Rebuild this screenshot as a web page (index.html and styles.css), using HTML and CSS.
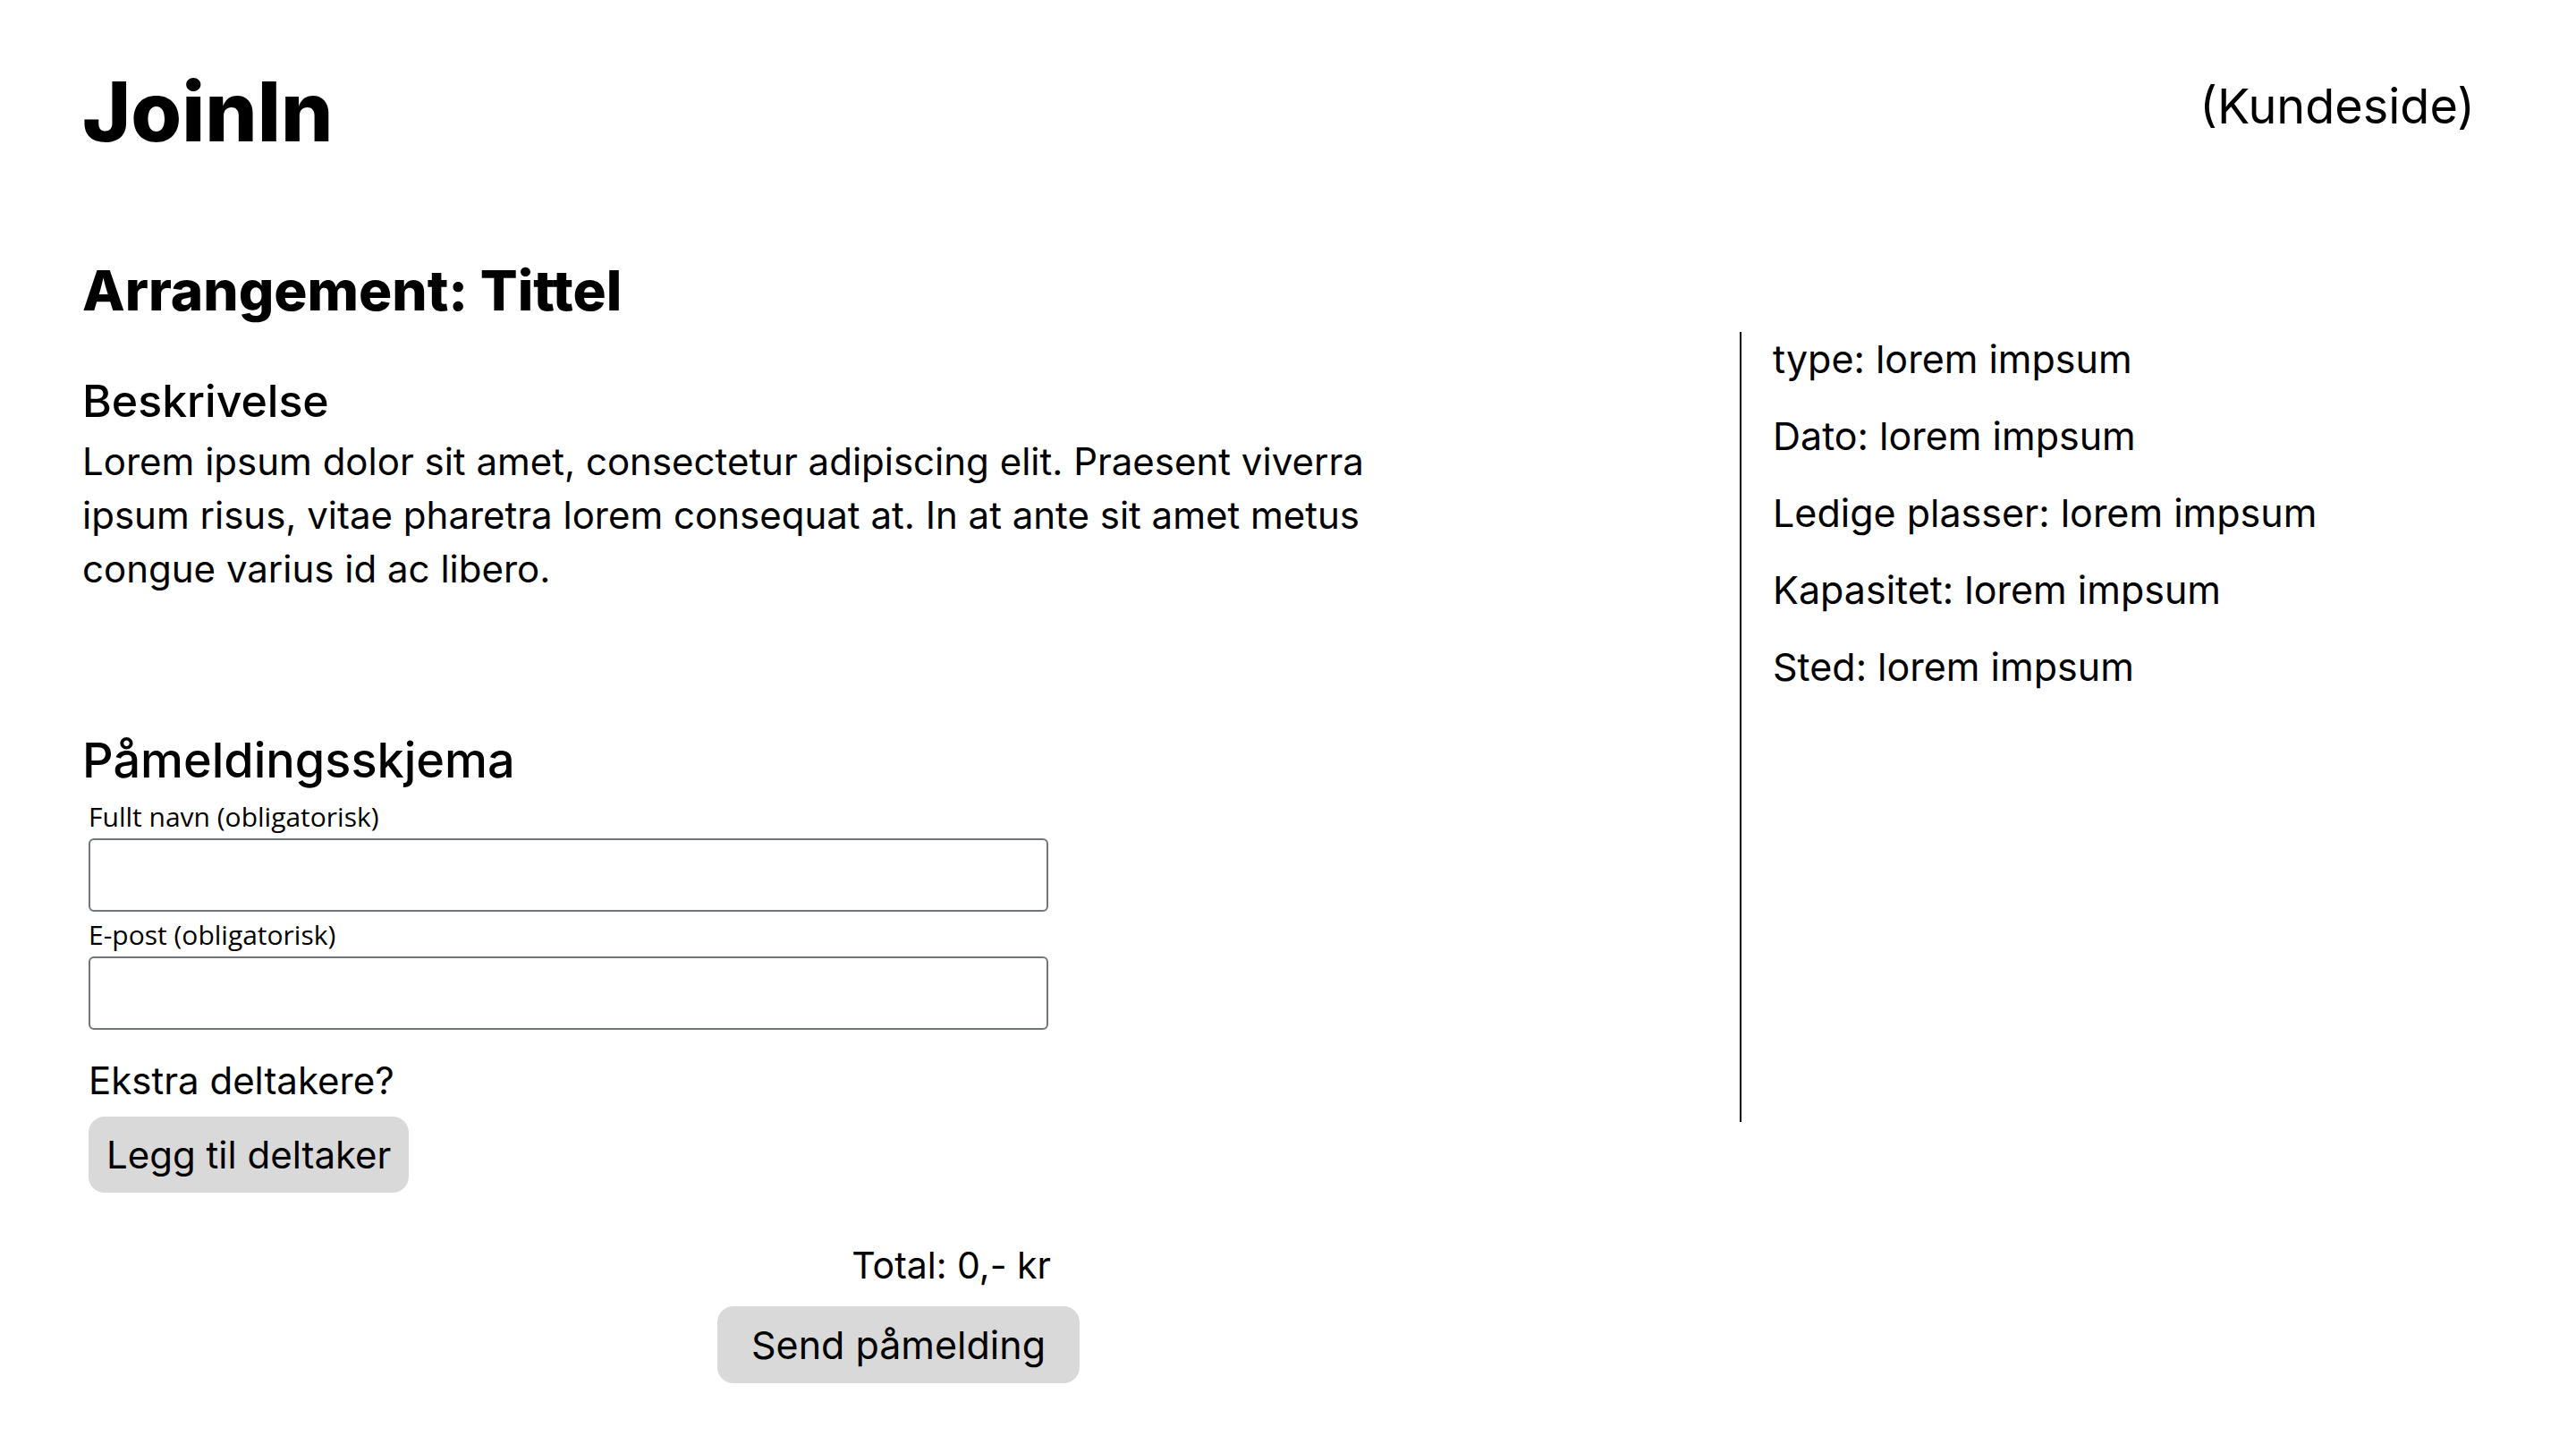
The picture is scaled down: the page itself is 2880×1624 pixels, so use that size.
FILE: index.html
```html
<!DOCTYPE html>
<html lang="no">
<head>
<meta charset="utf-8">
<title>JoinIn – Arrangement</title>
<link rel="stylesheet" href="styles.css">
</head>
<body>
<header class="topbar">
  <h1 class="logo">JoinIn</h1>
  <span class="page-kind">(Kundeside)</span>
</header>
<main class="event">
  <h2 class="event-title">Arrangement: Tittel</h2>
  <div class="event-body">
    <section class="event-main">
      <h3 class="section-title">Beskrivelse</h3>
      <p class="description">Lorem ipsum dolor sit amet, consectetur adipiscing elit. Praesent viverra ipsum risus, vitae pharetra lorem consequat at. In at ante sit amet metus congue varius id ac libero.</p>
      <h3 class="section-title form-title">Påmeldingsskjema</h3>
      <form class="signup">
        <label class="field-label" for="name">Fullt navn (obligatorisk)</label>
        <input class="field-input" id="name" type="text">
        <label class="field-label field-label-second" for="email">E-post (obligatorisk)</label>
        <input class="field-input" id="email" type="email">
        <p class="extra">Ekstra deltakere?</p>
        <button type="button" class="btn btn-add">Legg til deltaker</button>
        <p class="total">Total: 0,- kr</p>
      </form>
      <button type="submit" class="btn btn-send">Send påmelding</button>
    </section>
    <aside class="event-info">
      <p class="info-row">type: lorem impsum</p>
      <p class="info-row">Dato: lorem impsum</p>
      <p class="info-row">Ledige plasser: lorem impsum</p>
      <p class="info-row">Kapasitet: lorem impsum</p>
      <p class="info-row">Sted: lorem impsum</p>
    </aside>
  </div>
</main>
</body>
</html>
```

FILE: styles.css
```css
* {
  box-sizing: border-box;
}

body {
  margin: 0;
  background: #ffffff;
  color: #000000;
  font-family: Inter, "Noto Sans", sans-serif;
}

.topbar {
  display: flex;
  justify-content: space-between;
  align-items: flex-start;
  padding: 71px 113px 0 92px;
}

.logo {
  margin: 0;
  font-size: 92px;
  line-height: 108px;
  font-weight: 800;
}

.page-kind {
  margin-top: 17px;
  font-size: 54px;
  line-height: 62px;
  font-weight: 400;
}

.event {
  padding: 0 116px 0 92px;
}

.event-title {
  margin: 110px 0 10px;
  font-size: 62px;
  line-height: 72px;
  font-weight: 800;
}

.event-body {
  display: grid;
  grid-template-columns: 1825px 1fr;
  column-gap: 28px;
  align-items: start;
}

.event-main {
  padding-top: 47px;
}

.section-title {
  margin: 0;
  font-size: 50px;
  line-height: 60px;
  font-weight: 500;
}

.description {
  margin: 8px 0 0;
  max-width: 1520px;
  font-size: 42px;
  line-height: 60px;
}

.form-title {
  margin-top: 154px;
  font-size: 54px;
}

.signup {
  width: 1083px;
  margin-top: 15px;
  padding-left: 7px;
}

.field-label {
  display: block;
  font-family: "Open Sans", "Noto Sans", sans-serif;
  font-size: 30px;
  line-height: 36px;
}

.field-label-second {
  margin-top: 8px;
}

.field-input {
  display: block;
  width: 1073px;
  height: 82px;
  margin-top: 6px;
  border: 2px solid #70757e;
  border-radius: 6px;
  background: #ffffff;
}

.extra {
  margin: 27px 0 0;
  font-size: 42px;
  line-height: 60px;
}

.btn {
  border: none;
  background: #d9d9d9;
  color: #000000;
  font-family: Inter, "Noto Sans", sans-serif;
  font-size: 42px;
  line-height: 60px;
  border-radius: 18px;
}

.btn-add {
  display: block;
  height: 85px;
  margin-top: 10px;
  padding: 0 20px;
}

.total {
  margin: 51px 0 0;
  text-align: right;
  font-size: 41px;
  line-height: 60px;
}

.btn-send {
  display: block;
  height: 86px;
  margin: 16px auto 0;
  padding: 0 38px;
  font-size: 43px;
}

.event-info {
  height: 883px;
  border-left: 2px solid #000000;
  padding-left: 35px;
}

.info-row {
  margin: 0 0 26px;
  font-size: 43px;
  line-height: 60px;
}
```
